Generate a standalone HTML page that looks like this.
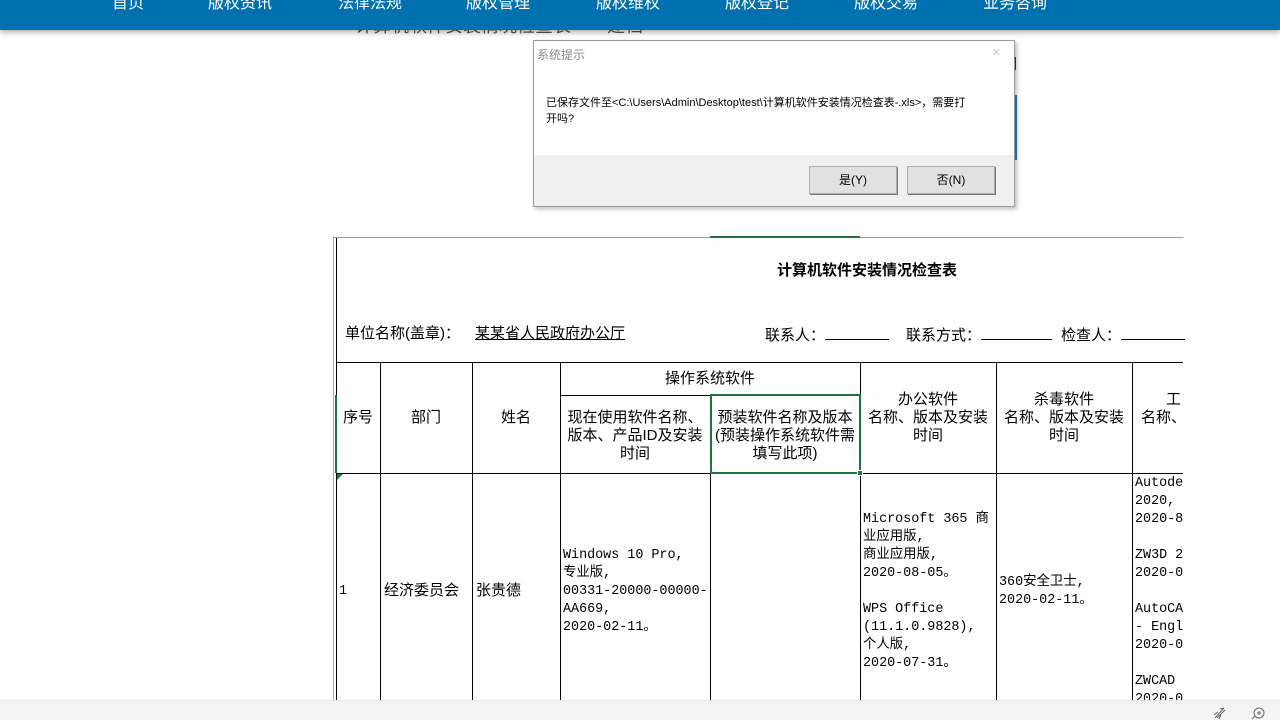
<!DOCTYPE html>
<html><head><meta charset="utf-8"><style>
*{margin:0;padding:0;box-sizing:border-box}
body{width:1280px;height:720px;overflow:hidden;background:#fff;position:relative;font-family:"Liberation Sans","Noto Sans CJK SC",sans-serif;color:#000}
.a{position:absolute}
.nav{left:0;top:0;width:1280px;height:30px;background:#0070b0;box-shadow:0 2px 6px rgba(0,0,0,.35);z-index:5}
.nav span{position:absolute;top:-11px;color:#fff;font-size:16px}
.h{background:#000;position:absolute;height:1px}
.v{background:#000;position:absolute;width:1px}
.t{position:absolute;font-size:15px;text-align:center;line-height:18px}
.m{position:absolute;font-family:"Liberation Mono","Noto Sans CJK SC",monospace;font-size:13.4px;line-height:18px;white-space:pre}
.btn{position:absolute;top:166px;width:88px;height:28px;border:1px solid #adadad;background:#e1e1e1;font-size:12px;text-align:center;line-height:26px;box-shadow:1px 1px 0 #777}
.ul{display:inline-block;border-bottom:1px solid #000;height:15px;vertical-align:baseline}
</style></head><body>
<div class="a" style="left:355px;top:12px;font-size:18px;color:#555;z-index:1">计算机软件安装情况检查表——建档</div>
<div class="a nav">
<span style="left:112px">首页</span><span style="left:208px">版权资讯</span><span style="left:338px">法律法规</span><span style="left:466px">版权管理</span><span style="left:596px">版权维权</span><span style="left:725px">版权登记</span><span style="left:854px">版权交易</span><span style="left:983px">业务咨询</span>
</div>
<div class="a" style="left:1014px;top:95px;width:3px;height:65px;background:#2a7fc0"></div>
<div class="a" style="left:1014px;top:57px;width:2px;height:13px;background:#333"></div>

<!-- sheet -->
<div class="a" style="left:333px;top:237px;width:850px;height:1px;background:#999"></div>
<div class="a" style="left:710px;top:236px;width:150px;height:2px;background:#217346"></div>
<div class="a" style="left:333px;top:237px;width:1px;height:483px;background:#aaa"></div>
<div class="v" style="left:336px;top:238px;height:470px"></div>
<div class="a" style="left:335px;top:395px;width:2px;height:78px;background:#217346"></div>
<div class="a" style="left:777px;top:262px;font-size:15px;font-weight:bold;line-height:18px">计算机软件安装情况检查表</div>
<div class="t" style="left:345px;top:325px">单位名称(盖章)：</div>
<div class="t" style="left:475px;top:325px;text-decoration:underline">某某省人民政府办公厅</div>
<div class="t" style="left:765px;top:325px;text-align:left;white-space:nowrap">联系人：<span class="ul" style="width:64px"></span><span style="display:inline-block;width:17px"></span>联系方式：<span class="ul" style="width:71px"></span><span style="display:inline-block;width:9px"></span>检查人：<span class="ul" style="width:64px"></span></div>
<div class="h" style="left:336px;top:362px;width:847px"></div>
<div class="h" style="left:560px;top:395px;width:150px"></div>
<div class="h" style="left:336px;top:473px;width:847px"></div>
<div class="v" style="left:380px;top:362px;height:338px"></div>
<div class="v" style="left:472px;top:362px;height:338px"></div>
<div class="v" style="left:560px;top:362px;height:338px"></div>
<div class="v" style="left:710px;top:395px;height:305px"></div>
<div class="v" style="left:860px;top:362px;height:338px"></div>
<div class="v" style="left:996px;top:362px;height:338px"></div>
<div class="v" style="left:1132px;top:362px;height:338px"></div>
<div class="a" style="left:710px;top:394px;width:151px;height:80px;border:2px solid #217346"></div>
<div class="a" style="left:857px;top:470px;width:6px;height:6px;background:#217346;border:1px solid #fff"></div>
<div class="a" style="left:337px;top:474px;width:0;height:0;border-top:6px solid #217346;border-right:6px solid transparent"></div>

<div class="t" style="left:336px;top:409px;width:44px">序号</div>
<div class="t" style="left:380px;top:409px;width:92px">部门</div>
<div class="t" style="left:472px;top:409px;width:88px">姓名</div>
<div class="t" style="left:560px;top:370px;width:300px">操作系统软件</div>
<div class="t" style="left:564px;top:409px;width:142px">现在使用软件名称、版本、产品ID及安装时间</div>
<div class="t" style="left:714px;top:409px;width:142px">预装软件名称及版本(预装操作系统软件需填写此项)</div>
<div class="t" style="left:864px;top:391px;width:128px">办公软件<br>名称、版本及安装时间</div>
<div class="t" style="left:1000px;top:391px;width:128px">杀毒软件<br>名称、版本及安装时间</div>
<div class="t" style="left:1141px;top:391px;text-align:left;white-space:pre">      工
名称、</div>

<div class="m" style="left:339px;top:583px">1</div>
<div class="t" style="left:384px;top:582px">经济委员会</div>
<div class="t" style="left:476px;top:582px">张贵德</div>
<div class="m" style="left:563px;top:547px">Windows 10 Pro,
专业版,
00331-20000-00000-
AA669,
2020-02-11。</div>
<div class="m" style="left:863px;top:511px">Microsoft 365 商
业应用版,
商业应用版,
2020-08-05。

WPS Office
(11.1.0.9828),
个人版,
2020-07-31。</div>
<div class="m" style="left:999px;top:574px">360安全卫士,
2020-02-11。</div>
<div class="a" style="left:1133px;top:474px;width:50px;height:226px;overflow:hidden"><div class="m" style="left:2px;top:1px">Autodesk
2020,
2020-8

ZW3D 2
2020-0

AutoCA
- Engl
2020-0

ZWCAD
2020-0</div></div>

<div class="a" style="left:0;top:700px;width:1280px;height:20px;background:#f4f4f4;border-top:1px solid #e6e6e6"></div>
<svg class="a" style="left:1211px;top:706px" width="16" height="14" viewBox="0 0 16 14" fill="none" stroke="#666" stroke-width="1"><path d="M4 12 L13 2 M13 2 L9 3 M6 12 L14 4 M3 9 L7 6 M8 13 L10 9"/></svg>
<svg class="a" style="left:1250px;top:706px" width="16" height="14" viewBox="0 0 16 14" fill="none" stroke="#666" stroke-width="1"><circle cx="9" cy="7" r="5"/><path d="M9 5v4M7 7h4M2 13l3-3"/></svg>

<!-- dialog -->
<div class="a" style="left:533px;top:40px;width:482px;height:167px;background:#f0f0f0;border:1px solid #9a9a9a;box-shadow:2px 2px 4px rgba(0,0,0,.25);z-index:10">
<div class="a" style="left:0;top:0;width:480px;height:114px;background:#fff"></div>
<div class="a" style="left:3px;top:5px;font-size:12px;color:#888">系统提示</div>
<div class="a" style="left:458px;top:3px;font-size:15px;color:#ccc">×</div>
<div class="a" style="left:12px;top:54px;width:420px;font-size:11px;line-height:16px">已保存文件至&lt;C:\Users\Admin\Desktop\test\计算机软件安装情况检查表-.xls&gt;，需要打开吗?</div>
<div class="btn" style="left:275px;top:125px">是(Y)</div>
<div class="btn" style="left:373px;top:125px">否(N)</div>
</div>
</body></html>
